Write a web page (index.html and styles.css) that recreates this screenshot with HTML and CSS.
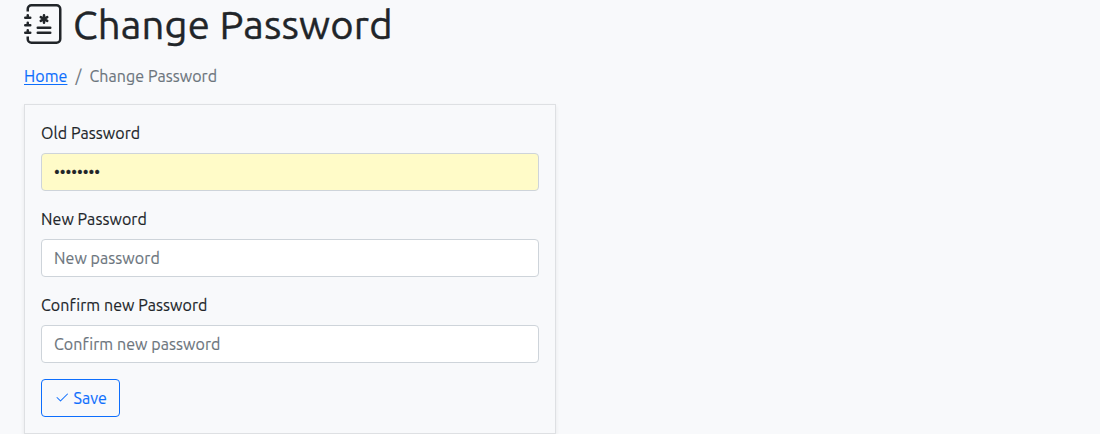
FILE: index.html
```html
<!DOCTYPE html>
<html lang="en">
<head>
<meta charset="utf-8">
<title>Change Password</title>
<link rel="stylesheet" href="styles.css">
</head>
<body>
<main class="page">
  <h1 class="title">
    <svg class="title-icon" viewBox="0 0 16 16" fill="currentColor" aria-hidden="true">
      <path d="M8 4a.5.5 0 0 1 .5.5v.634l.549-.317a.5.5 0 1 1 .5.866L9 6l.549.317a.5.5 0 1 1-.5.866L8.5 6.866V7.5a.5.5 0 0 1-1 0v-.634l-.549.317a.5.5 0 1 1-.5-.866L7 6l-.549-.317a.5.5 0 0 1 .5-.866l.549.317V4.5A.5.5 0 0 1 8 4zM5 9.5a.5.5 0 0 1 .5-.5h5a.5.5 0 0 1 0 1h-5a.5.5 0 0 1-.5-.5zm0 2a.5.5 0 0 1 .5-.5h5a.5.5 0 0 1 0 1h-5a.5.5 0 0 1-.5-.5z"/>
      <path d="M3 0h10a2 2 0 0 1 2 2v12a2 2 0 0 1-2 2H3a2 2 0 0 1-2-2v-1h1v1a1 1 0 0 0 1 1h10a1 1 0 0 0 1-1V2a1 1 0 0 0-1-1H3a1 1 0 0 0-1 1v1H1V2a2 2 0 0 1 2-2z"/>
      <path d="M1 5v-.5a.5.5 0 0 1 1 0V5h.5a.5.5 0 0 1 0 1h-2a.5.5 0 0 1 0-1H1zm0 3v-.5a.5.5 0 0 1 1 0V8h.5a.5.5 0 0 1 0 1h-2a.5.5 0 0 1 0-1H1zm0 3v-.5a.5.5 0 0 1 1 0v.5h.5a.5.5 0 0 1 0 1h-2a.5.5 0 0 1 0-1H1z"/>
    </svg>
    <span class="title-text">Change Password</span>
  </h1>
  <nav class="breadcrumb">
    <a class="crumb-link" href="#">Home</a>
    <span class="crumb-separator">/</span>
    <span class="crumb-current">Change Password</span>
  </nav>
  <form class="card">
    <div class="field">
      <label class="label" for="old">Old Password</label>
      <input class="input input-filled" id="old" type="password" value="password">
    </div>
    <div class="field">
      <label class="label" for="new">New Password</label>
      <input class="input" id="new" type="password" placeholder="New password">
    </div>
    <div class="field">
      <label class="label" for="confirm">Confirm new Password</label>
      <input class="input" id="confirm" type="password" placeholder="Confirm new password">
    </div>
    <button class="save" type="button">
      <svg class="save-icon" viewBox="0 0 16 16" fill="currentColor" aria-hidden="true">
        <path d="M13.854 3.646a.5.5 0 0 1 0 .708l-7 7a.5.5 0 0 1-.708 0l-3.5-3.5a.5.5 0 1 1 .708-.708L6.5 10.293l6.646-6.647a.5.5 0 0 1 .708 0z"/>
      </svg>
      <span>Save</span>
    </button>
  </form>
</main>
</body>
</html>
```
FILE: styles.css
```css
* { box-sizing: border-box; }
body {
  margin: 0;
  background: #f8f9fb;
  color: #212529;
  font: 16px/24px Ubuntu, "Noto Sans", sans-serif;
  letter-spacing: 0.07px;
  -webkit-text-stroke: 0.15px currentColor;
  overflow: hidden;
}
.page { padding: 0 24px; }
.title {
  display: flex;
  align-items: center;
  gap: 9px;
  height: 48px;
  margin: 0 0 16px;
  font-size: 40px;
  font-weight: 400;
  line-height: 48px;
}
.title-icon { width: 40px; height: 40px; }
.title-text {
  padding-top: 1px;
  letter-spacing: 0.2px;
  white-space: nowrap;
  -webkit-text-stroke: 0.4px currentColor;
}
.breadcrumb {
  display: flex;
  gap: 8px;
  height: 24px;
  margin-bottom: 16px;
  color: #6c757d;
}
.crumb-link { color: #0d6efd; text-underline-offset: 2px; }
.card {
  width: 532px;
  height: 330px;
  padding: 16px;
  border: 1px solid #dee0e3;
  box-shadow: 0 2px 4px rgba(0, 0, 0, .075);
}
.field { margin-bottom: 16px; }
.label { display: block; width: max-content; margin-bottom: 8px; }
.input {
  display: block;
  width: 100%;
  height: 38px;
  padding: 6px 12px;
  border: 1px solid #ced4da;
  border-radius: 4px;
  background: #fff;
  color: #212529;
  font: inherit;
  letter-spacing: inherit;
}
.input::placeholder { color: #6c757d; opacity: 1; }
.input-filled { background: #fffbc8; letter-spacing: 0; }
.save {
  display: flex;
  align-items: center;
  gap: 3.5px;
  width: 79px;
  height: 38px;
  padding: 6px 12px;
  border: 1px solid #0d6efd;
  border-radius: 4px;
  background: transparent;
  color: #0d6efd;
  font: inherit;
  letter-spacing: inherit;
}
.save-icon { flex: none; width: 16px; height: 16px; }
```
